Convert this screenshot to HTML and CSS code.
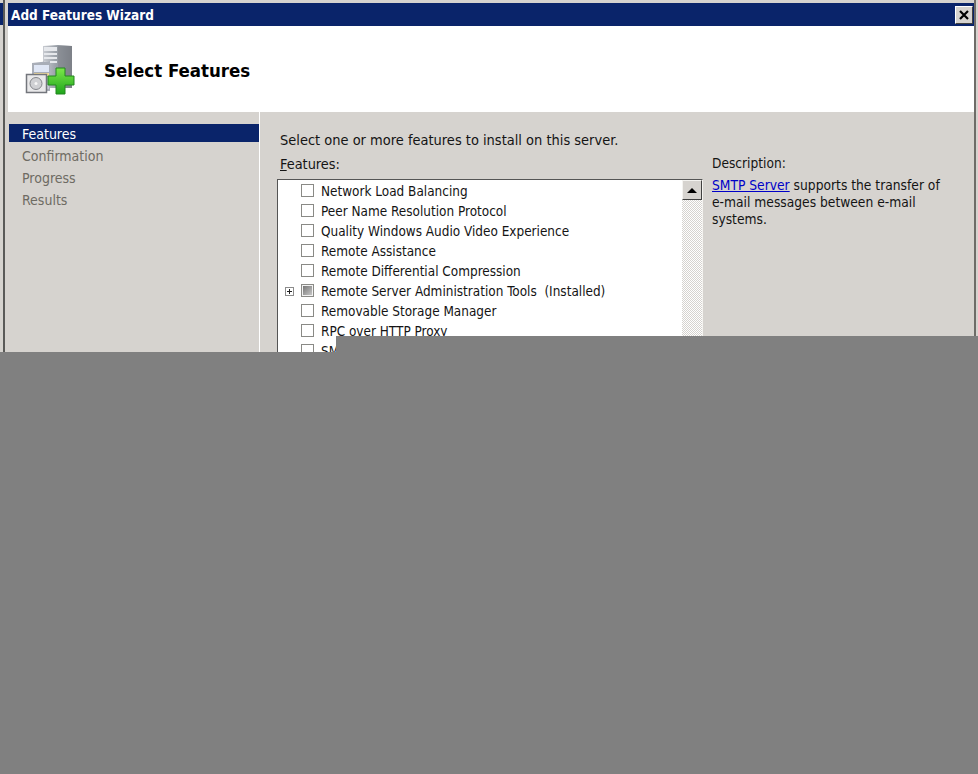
FILE: index.html
```html
<!DOCTYPE html>
<html lang="en">
<head>
    <meta charset="UTF-8">
    <title>Add Features Wizard</title>
    <link rel="stylesheet" href="styles.css">
</head>
<body>
    <div class="screen">
        <div class="edge"><div class="edge-title"></div></div>
        <div class="window">
            <div class="titlebar">
                <span class="titlebar-text">Add Features Wizard</span>
                <button class="close">
                    <svg width="10" height="10" viewBox="0 0 10 10"><path d="M1 1l8 8M9 1l-8 8" stroke="#000" stroke-width="2.2" fill="none"/></svg>
                </button>
            </div>
            <div class="header">
                <svg class="header-icon" width="52" height="54" viewBox="0 0 52 54">
                    <defs>
                        <linearGradient id="tower" x1="0" x2="1" y1="0" y2="0">
                            <stop offset="0" stop-color="#c9ccd2"/>
                            <stop offset="0.45" stop-color="#9aa0a8"/>
                            <stop offset="1" stop-color="#6f747c"/>
                        </linearGradient>
                        <linearGradient id="plus" x1="0" x2="0" y1="0" y2="1">
                            <stop offset="0" stop-color="#7ce84a"/>
                            <stop offset="1" stop-color="#1fa51c"/>
                        </linearGradient>
                    </defs>
                    <path d="M18 4l15-1 14 1v42H18z" fill="url(#tower)"/>
                    <path d="M19 5h13v4H19zM19 11h13v2H19zM19 15h13v2H19zM19 19h13v2H19z" fill="#e6e8ec"/>
                    <path d="M33 4h14v42H33z" fill="#85898f" opacity="0.6"/>
                    <path d="M7 21l18-2v30H7z" fill="#a9aeb8"/>
                    <path d="M9 23h15v7H9z" fill="#dfe6f5"/>
                    <path d="M9 31h15v3H9z" fill="#f2dc9a"/>
                    <path d="M9 35h15v12H9z" fill="#c5cbd6"/>
                    <path d="M1.500 32.500h20v18h-20z" fill="#e9e9ea" stroke="#73767c" stroke-width="1.500"/>
                    <circle cx="11" cy="41.500" r="6" fill="#cfd0d3" stroke="#85878c"/>
                    <circle cx="11" cy="41.500" r="1.500" fill="#f7f7f7"/>
                    <path d="M31 26h9v8h9v9h-9v9h-9v-9h-8v-9h8z" fill="url(#plus)" stroke="#23861f" stroke-width="1"/>
                </svg>
                <h1 class="header-title">Select Features</h1>
            </div>
            <div class="body">
                <nav class="nav">
                    <div class="nav-item nav-current">Features</div>
                    <div class="nav-item">Confirmation</div>
                    <div class="nav-item">Progress</div>
                    <div class="nav-item">Results</div>
                </nav>
                <main class="content">
                    <p class="intro">Select one or more features to install on this server.</p>
                    <div class="columns">
                        <div class="features">
                            <div class="label"><u>F</u>eatures:</div>
                            <div class="listbox">
                                <ul class="tree">
                                    <li class="row"><span class="expander"></span><span class="check"></span>Network Load Balancing</li>
                                    <li class="row"><span class="expander"></span><span class="check"></span>Peer Name Resolution Protocol</li>
                                    <li class="row"><span class="expander"></span><span class="check"></span>Quality Windows Audio Video Experience</li>
                                    <li class="row"><span class="expander"></span><span class="check"></span>Remote Assistance</li>
                                    <li class="row"><span class="expander"></span><span class="check"></span>Remote Differential Compression</li>
                                    <li class="row"><span class="expander expander-plus"></span><span class="check check-partial"></span>Remote Server Administration Tools&nbsp; (Installed)</li>
                                    <li class="row"><span class="expander"></span><span class="check"></span>Removable Storage Manager</li>
                                    <li class="row"><span class="expander"></span><span class="check"></span>RPC over HTTP Proxy</li>
                                    <li class="row"><span class="expander"></span><span class="check"></span>SMTP Server</li>
                                </ul>
                                <div class="scrollbar">
                                    <div class="scroll-up"><span class="arrow"></span></div>
                                </div>
                            </div>
                        </div>
                        <div class="description">
                            <div class="label">Description:</div>
                            <p class="desc-text"><a href="#">SMTP Server</a> supports the transfer of e-mail messages between e-mail systems.</p>
                        </div>
                    </div>
                </main>
            </div>
        </div>
    </div>
    <div class="mask"></div>
</body>
</html>
```

FILE: styles.css
```css
body {
    margin: 0;
    height: 774px;
    overflow: hidden;
    background: #808080;
    position: relative;
    font-family: "DejaVu Sans Condensed", "DejaVu Sans", sans-serif;
    font-size: 14px;
    color: #141414;
}

.screen {
    display: flex;
    height: 352px;
    overflow: hidden;
    background: #d6d3cf;
}

.edge {
    width: 3px;
    padding-top: 3px;
    flex: none;
}

.edge-title {
    height: 22px;
    background: #0a246a;
}

.window {
    width: 973px;
    box-sizing: border-box;
    flex: none;
    border-left: 2px solid #5a5a58;
    border-right: 2px solid #6e6c68;
    padding: 3px 0 0 3px;
    display: flex;
    flex-direction: column;
}

.titlebar {
    height: 23px;
    background: #0a246a;
    display: flex;
    align-items: center;
    justify-content: space-between;
    padding: 0 1px 0 3px;
    flex: none;
}

.titlebar-text {
    color: #fff;
    font-weight: bold;
    font-size: 13.500px;
}

.close {
    width: 18px;
    height: 18px;
    padding: 0;
    background: #d6d3cf;
    border: 1px solid;
    border-color: #fff #404040 #404040 #fff;
    display: flex;
    align-items: center;
    justify-content: center;
}

.header {
    height: 86px;
    background: #fff;
    display: flex;
    align-items: center;
    flex: none;
}

.header-icon {
    margin-left: 17px;
    margin-right: 27px;
}

.header-title {
    margin: 2px 0 0;
    font-size: 18.500px;
    font-weight: bold;
    color: #000;
}

.body {
    flex: 1;
    display: flex;
}

.nav {
    width: 252px;
    box-sizing: border-box;
    border-right: 1px solid #fff;
    padding: 12px 0 0 1px;
    flex: none;
}

.nav-item {
    height: 18px;
    line-height: 20px;
    margin-bottom: 4px;
    padding-left: 13px;
    color: #6e6b63;
}

.nav-current {
    background: #0a246a;
    color: #fff;
}

.content {
    flex: 1;
    padding: 19px 0 0 20px;
}

.intro {
    margin: 0 0 6px;
    line-height: 18px;
    font-size: 14.470px;
}

.columns {
    display: flex;
    margin-left: -3px;
}

.features {
    width: 426px;
    flex: none;
}

.label {
    line-height: 17px;
    margin-left: 3px;
}

.features .label {
    margin-top: 1px;
    margin-bottom: 6px;
    font-size: 14.400px;
}

.listbox {
    display: flex;
    height: 200px;
    background: #fff;
    border: 1px solid;
    border-color: #555 #f4f3f0 #f4f3f0 #555;
    box-sizing: border-box;
}

.tree {
    flex: 1;
    list-style: none;
    margin: 0;
    padding: 1px 0 0;
    font-size: 13.450px;
}

.row {
    display: flex;
    align-items: center;
    height: 20px;
    white-space: nowrap;
}

.expander {
    width: 9px;
    height: 9px;
    margin: 0 7px 0 7px;
    flex: none;
    box-sizing: border-box;
}

.expander-plus {
    border: 1px solid #8c8c8c;
    background:
        linear-gradient(#222, #222) center / 5px 1px no-repeat,
        linear-gradient(#222, #222) center / 1px 5px no-repeat,
        #fff;
}

.check {
    width: 13px;
    height: 13px;
    margin: -2px 7px 0 0;
    flex: none;
    background: #fff;
    border: 1px solid #8a8a86;
    box-sizing: border-box;
}

.check-partial {
    background: linear-gradient(135deg, #6d6d6d, #cfcfcf);
    box-shadow: inset 0 0 0 1px #f2f2f2;
}

.scrollbar {
    width: 20px;
    flex: none;
    background: repeating-conic-gradient(#fff 0 25%, #d6d3cf 0 50%) 0 0 / 2px 2px;
}

.scroll-up {
    height: 20px;
    box-sizing: border-box;
    background: #d6d3cf;
    border: 1px solid;
    border-color: #f4f3f0 #404040 #404040 #f4f3f0;
    display: flex;
    align-items: center;
    justify-content: center;
}

.arrow {
    width: 0;
    height: 0;
    border: 5px solid transparent;
    border-top: 0;
    border-bottom: 5px solid #000;
}

.description {
    margin-left: 9px;
    width: 236px;
}

.description .label {
    margin-left: 0;
    font-size: 13.600px;
}

.desc-text {
    margin: 5px 0 0;
    line-height: 17px;
    font-size: 13.700px;
}

.desc-text a {
    color: #0000c8;
}

/* grey cover over the lower part of the capture */
.mask {
    position: absolute;
    left: 336px;
    top: 336px;
    right: 0;
    height: 16px;
    background: #808080;
}
```
